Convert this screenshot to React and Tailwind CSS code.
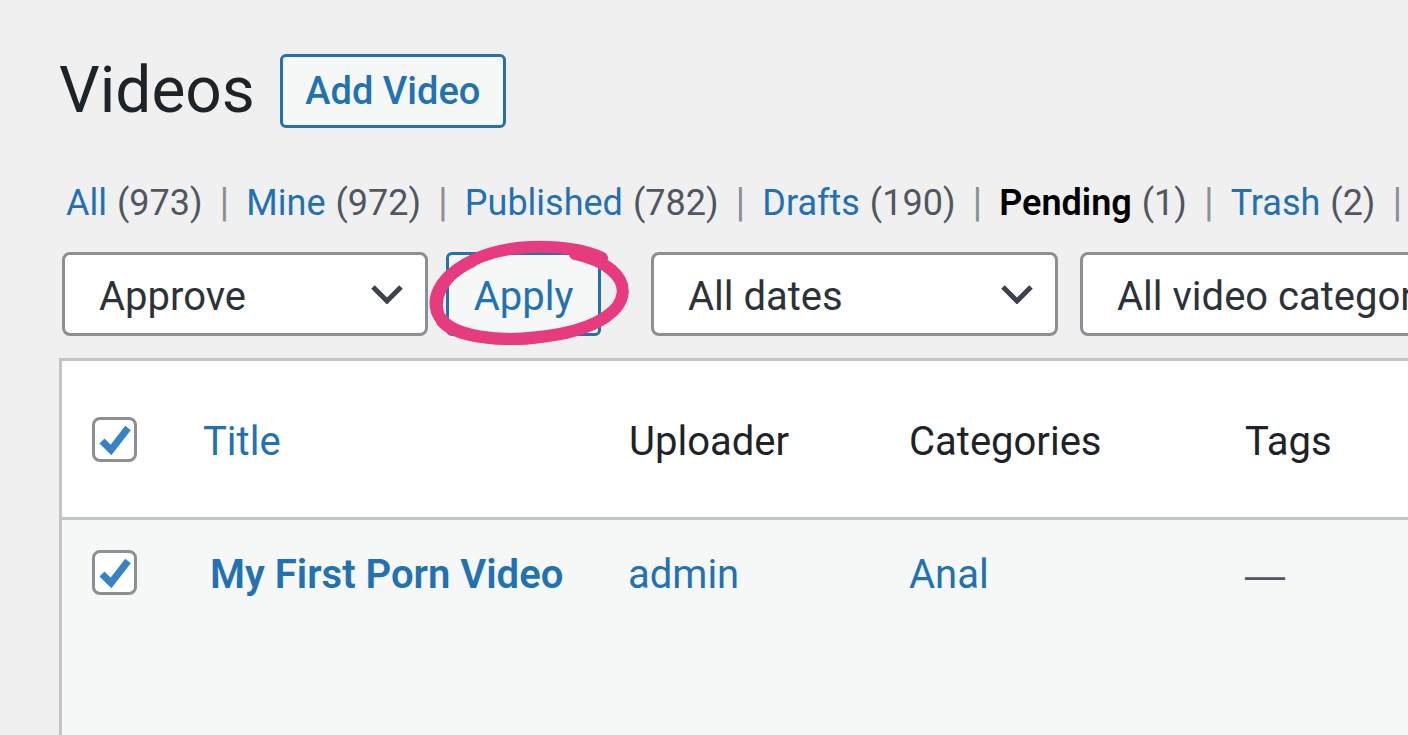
const font = { fontFamily: "Roboto, 'Noto Sans', sans-serif" };

function Check() {
  return (
    <span className="relative block w-[45px] h-[45px] rounded-[8px] border-[3px] border-[#8c8f94] bg-white">
      <svg width="45" height="45" viewBox="0 0 45 45" className="absolute left-[-3px] top-[-3px]">
        <polyline points="10,24 19,33 36,11" fill="none" stroke="#3582c4" strokeWidth="7" />
      </svg>
    </span>
  );
}

function Select({ label, width }) {
  return (
    <div
      className={`flex items-center justify-between h-[84px] ${width} shrink-0 rounded-[8px] border-[3px] border-[#8c8f94] bg-white pl-[34px] pr-[22px] text-[40px] text-[#2c3338]`}
    >
      <span className="whitespace-nowrap pt-[6px]">{label}</span>
      <svg width="32" height="20" viewBox="0 0 32 20" className="shrink-0">
        <polyline points="2,3 16,17 30,3" fill="none" stroke="#3c434a" strokeWidth="5" />
      </svg>
    </div>
  );
}

const views = [
  { name: "All", count: 973 },
  { name: "Mine", count: 972 },
  { name: "Published", count: 782 },
  { name: "Drafts", count: 190 },
  { name: "Pending", count: 1, current: true },
  { name: "Trash", count: 2 },
];

export default function App() {
  return (
    <div className="relative w-[1408px] h-[735px] overflow-hidden bg-[#f0f0f1]" style={font}>
      <div className="pl-[59px] pt-[54px]">
        {/* heading */}
        <div className="flex items-center">
          <h1 className="text-[64px] leading-[74px] text-[#1d2327]">Videos</h1>
          <button className="ml-[25px] h-[74px] w-[226px] rounded-[6px] border-[3px] border-[#2271b1] bg-[#f6f7f7] text-[38px] font-medium text-[#2271b1]">
            Add Video
          </button>
        </div>

        {/* status views */}
        <ul className="mt-[49px] ml-[7px] flex items-center text-[36px] leading-[52px] text-[#50575e] whitespace-nowrap">
          {views.map((v) => (
            <li key={v.name} className="flex items-center">
              {v.current ? (
                <span className="font-semibold text-black">{v.name}</span>
              ) : (
                <span className="text-[#2271b1]">{v.name}</span>
              )}
              <span className="ml-[10px]">({v.count})</span>
              <span className="mx-[17px] text-[#8c8f94] text-[40px]">|</span>
            </li>
          ))}
        </ul>

        {/* bulk actions + filters */}
        <div className="mt-[23px] ml-[3px] flex items-center">
          <Select label="Approve" width="w-[366px]" />
          <button className="ml-[18px] h-[84px] w-[155px] shrink-0 rounded-[6px] border-[3px] border-[#2271b1] bg-[#f6f7f7] pt-[6px] text-[40px] text-[#2271b1]">
            Apply
          </button>
          <div className="ml-[50px]">
            <Select label="All dates" width="w-[407px]" />
          </div>
          <div className="ml-[22px]">
            <Select label="All video categories" width="w-[420px]" />
          </div>
        </div>

        {/* list table */}
        <div className="mt-[22px] w-[1400px] border-l-[3px] border-t-[3px] border-[#c3c4c7]">
          <div className="flex items-center h-[159px] bg-white border-b-[3px] border-[#c3c4c7] text-[40px] text-[#1d2327]">
            <div className="w-[141px] pl-[30px]">
              <Check />
            </div>
            <div className="w-[426px] pt-[6px] text-[#2271b1]">Title</div>
            <div className="w-[280px] pt-[6px]">Uploader</div>
            <div className="w-[336px] pt-[6px]">Categories</div>
            <div className="pt-[6px]">Tags</div>
          </div>
          <div className="flex items-start h-[300px] bg-[#f6f7f7] pt-[30px] text-[40px] text-[#2271b1]">
            <div className="w-[148px] pl-[30px]">
              <Check />
            </div>
            <div className="w-[418px] font-semibold leading-[50px]">My First Porn Video</div>
            <div className="w-[281px] leading-[50px]">admin</div>
            <div className="w-[336px] leading-[50px]">Anal</div>
            <div className="leading-[50px] text-[#50575e]" style={{ fontFamily: "'Liberation Sans', sans-serif" }}>
              —
            </div>
          </div>
        </div>
      </div>

      {/* pink annotation around Apply */}
      <svg className="absolute left-0 top-0 pointer-events-none" width="1408" height="735">
        <path
          d="M575 254 C 640 268, 642 318, 560 334 C 500 345, 447 337, 437 312 C 427 282, 470 250, 530 247 C 560 246, 585 250, 602 258"
          fill="none"
          stroke="#e63b7f"
          strokeWidth="12"
          strokeLinecap="round"
        />
        <path
          d="M472 262 C 442 276, 430 300, 442 322 C 458 340, 512 342, 542 337"
          fill="none"
          stroke="#e63b7f"
          strokeWidth="11"
          strokeLinecap="round"
        />
      </svg>
    </div>
  );
}
